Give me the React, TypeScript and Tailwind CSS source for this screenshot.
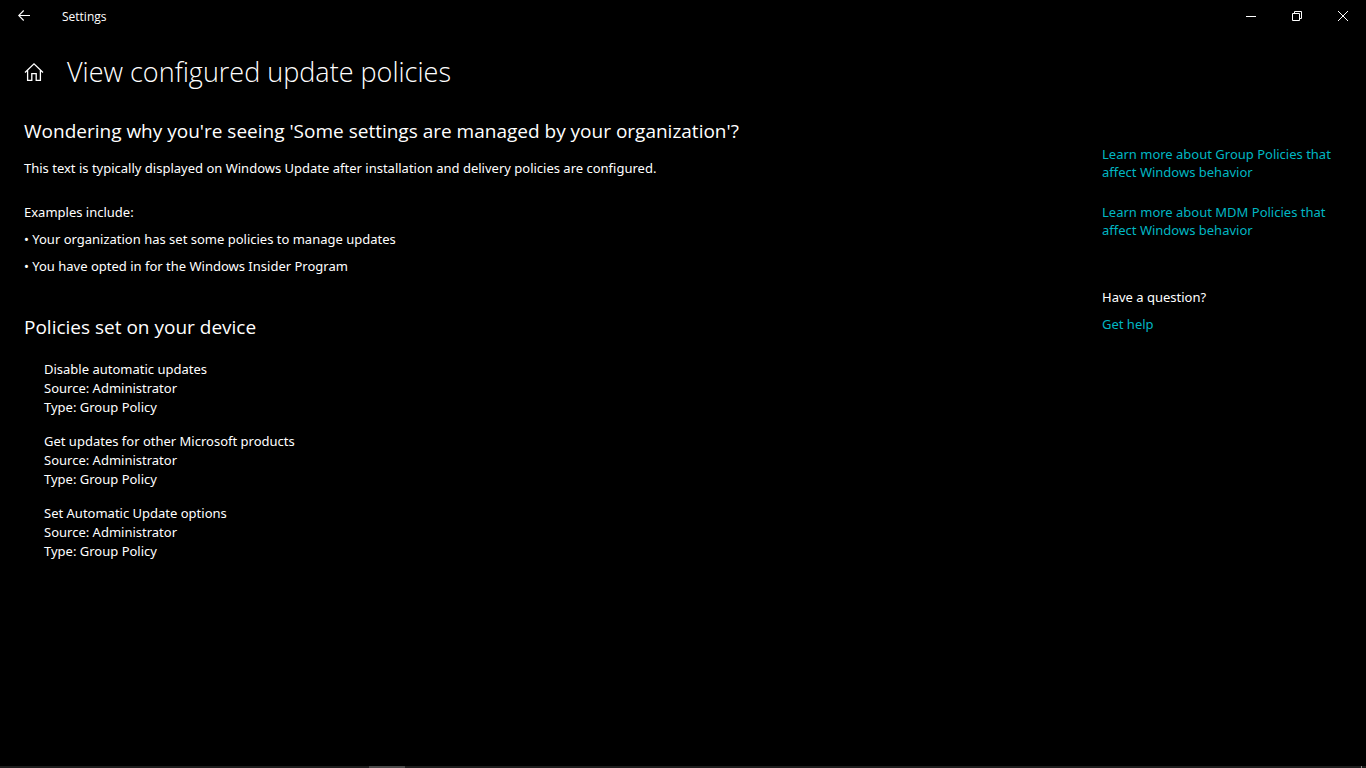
import { ReactNode } from 'react';

const policies = [
    { name: 'Disable automatic updates', source: 'Administrator', type: 'Group Policy' },
    { name: 'Get updates for other Microsoft products', source: 'Administrator', type: 'Group Policy' },
    { name: 'Set Automatic Update options', source: 'Administrator', type: 'Group Policy' },
];

const examples = [
    'Your organization has set some policies to manage updates',
    'You have opted in for the Windows Insider Program',
];

const WindowButton = ({ label, children }: { label: string; children: ReactNode }) => (
    <button type="button" aria-label={label} className="flex h-8 w-[46px] items-center justify-center">
        <svg width="10" height="10" viewBox="0 0 10 10" fill="none" stroke="currentColor">
            {children}
        </svg>
    </button>
);

const TitleBar = () => (
    <div className="flex h-8 items-center">
        <button type="button" aria-label="Back" className="flex h-8 w-12 items-center justify-center">
            <svg width="12" height="12" viewBox="0 0 12 12" fill="none" stroke="currentColor" strokeWidth="1.1">
                <path d="M12 5.5H.7M5.7.5l-5 5 5 5" />
            </svg>
        </button>
        <span className="pt-0.5 pl-[14px] font-['Open_Sans',sans-serif] text-[12px] leading-4">Settings</span>
        <div className="ml-auto flex">
            <WindowButton label="Minimize">
                <path d="M0 5.5h10" />
            </WindowButton>
            <WindowButton label="Restore">
                <path d="M.5 2.5h7v7h-7zM2.5 2.5v-2h7v7h-2" />
            </WindowButton>
            <WindowButton label="Close">
                <path d="M0 0l10 10M10 0L0 10" />
            </WindowButton>
        </div>
    </div>
);

const HelpLink = ({ children }: { children: ReactNode }) => (
    <a href="#" className="block text-[#00b7c3] hover:text-gray-400">{children}</a>
);

const App = () => {
    return (
        <div className="flex min-h-screen flex-col bg-black font-['Noto_Sans','Open_Sans',sans-serif] text-[13px] text-white">
            <TitleBar />

            <header className="mt-5 flex h-10 items-center gap-[23px] px-6">
                <button type="button" aria-label="Home">
                    <svg width="20" height="20" viewBox="0 0 20 20" fill="none" stroke="currentColor" strokeWidth="1.3">
                        <path d="M1 10.5l9-8.7 9 8.7M3.6 8.5v9.8h4.2v-6.7h4.4v6.7h4.2V8.5" />
                    </svg>
                </button>
                <h1 className="font-['Open_Sans',sans-serif] text-[27px] leading-10 font-light">
                    View configured update policies
                </h1>
            </header>

            <main className="flex flex-1 justify-between gap-8 px-6 pt-[25px]">
                <div>
                    <h2 className="font-['Open_Sans',sans-serif] text-[19px] leading-7">
                        Wondering why you're seeing 'Some settings are managed by your organization'?
                    </h2>
                    <p className="mt-[13px] leading-5">
                        This text is typically displayed on Windows Update after installation and delivery policies are configured.
                    </p>

                    <p className="mt-6 leading-5">Examples include:</p>
                    <ul className="mt-[7px] flex flex-col gap-[7px] leading-5">
                        {examples.map(example => (
                            <li key={example}>• {example}</li>
                        ))}
                    </ul>

                    <h2 className="mt-[37px] font-['Open_Sans',sans-serif] text-[19px] leading-7">
                        Policies set on your device
                    </h2>
                    <ul className="mt-[19px] flex flex-col gap-[15px] pl-5 leading-[19px]">
                        {policies.map(policy => (
                            <li key={policy.name}>
                                <p>{policy.name}</p>
                                <p>Source: {policy.source}</p>
                                <p>Type: {policy.type}</p>
                            </li>
                        ))}
                    </ul>
                </div>

                <aside className="w-60 shrink-0 pt-7 leading-[18px]">
                    <div className="flex flex-col gap-[22px]">
                        <HelpLink>Learn more about Group Policies that affect Windows behavior</HelpLink>
                        <HelpLink>Learn more about MDM Policies that affect Windows behavior</HelpLink>
                    </div>
                    <p className="mt-[49px]">Have a question?</p>
                    <div className="mt-[9px]">
                        <HelpLink>Get help</HelpLink>
                    </div>
                </aside>
            </main>

            {/* top edge of the auto-hidden taskbar */}
            <div className="flex h-0.5 bg-[#1e1e1e]">
                <div className="ml-[27%] w-9 bg-[#4a4a4a]" />
                <div className="mr-1 ml-auto w-px bg-[#8a8a8a]" />
            </div>
        </div>
    );
};

export default App;
